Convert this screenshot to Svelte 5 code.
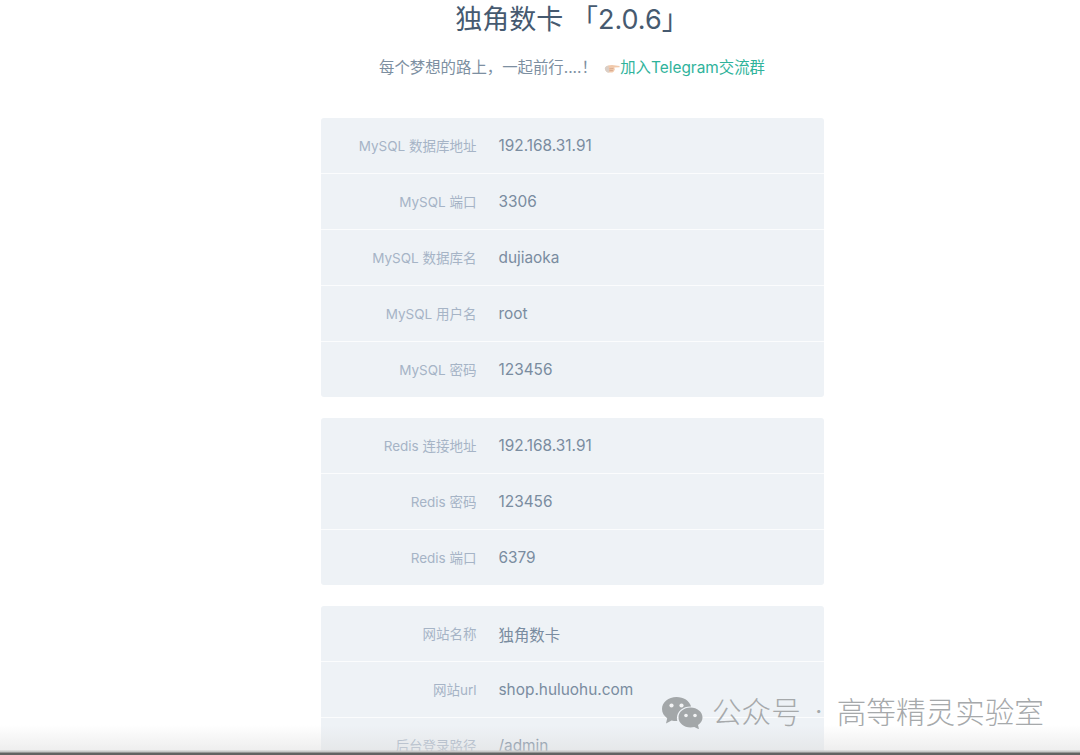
<script>
  const groups = [
    [
      ["MySQL 数据库地址", "192.168.31.91"],
      ["MySQL 端口", "3306"],
      ["MySQL 数据库名", "dujiaoka"],
      ["MySQL 用户名", "root"],
      ["MySQL 密码", "123456"],
    ],
    [
      ["Redis 连接地址", "192.168.31.91"],
      ["Redis 密码", "123456"],
      ["Redis 端口", "6379"],
    ],
    [
      ["网站名称", "独角数卡"],
      ["网站url", "shop.huluohu.com"],
      ["后台登录路径", "/admin"],
    ],
  ];
</script>

<div class="page">
  <main class="content">
    <h1>独角数卡 「2.0.6」</h1>
    <p class="intro">
      <span>每个梦想的路上，一起前行....！</span>
      <a href="#top">
        <svg class="hand" viewBox="0 0 18 12" width="16" height="11" aria-hidden="true">
          <path d="M1 6C1.600 3.800 3.800 2.600 6.500 2.400L9 2 17.500 3.300 17.500 4.600 11.500 5 12.200 7 11 9.500 9.500 10.500 5 10.600C3 10.400 1.200 8.400 1 6Z" fill="#f1c9ab" />
          <path d="M1 6C1.200 8.400 3 10.400 5 10.600L6 10.600 5 3 3.200 3.200C1.900 3.800 1.200 4.800 1 6Z" fill="#d9cfc8" />
          <path d="M6 6.400 10.500 6M6 8.400 10 8.200" stroke="#c99a80" stroke-width="0.7" fill="none" />
        </svg>加入Telegram交流群
      </a>
    </p>

    {#each groups as rows}
      <section class="group">
        {#each rows as [label, value]}
          <div class="row">
            <span class="label">{label}</span>
            <span class="value">{value}</span>
          </div>
        {/each}
      </section>
    {/each}
  </main>

  <div class="shade"></div>

  <div class="mark">
    <svg viewBox="0 0 42 34" width="42" height="34" aria-hidden="true">
      <path d="M15.500 2C7.500 2 1 7.400 1 14c0 3.700 2 7 5.200 9.200L5 28.400l5.600-3c1.500.4 3 .7 4.700.7h1a10.500 10.500 0 0 1-.4-2.900c0-6.700 6-11.600 13.600-11.600h.6C28.600 5.800 22.600 2 15.500 2Z" fill="#a3a7a9" />
      <path d="M29.500 12.500c-6.700 0-12 4.400-12 10s5.300 10 12 10c1.300 0 2.600-.2 3.800-.5l4.700 2.300-1-4.200c2.700-1.900 4.500-4.600 4.500-7.600 0-5.600-5.300-10-12-10Z" fill="#a3a7a9" />
      <circle cx="10.500" cy="10.500" r="2.100" fill="#f2f3f4" />
      <circle cx="20.500" cy="10.500" r="2.100" fill="#f2f3f4" />
      <circle cx="25" cy="20.500" r="1.800" fill="#f2f3f4" />
      <circle cx="34" cy="20.500" r="1.800" fill="#f2f3f4" />
    </svg>
    <span class="mark-text">公众号</span>
    <span class="dot">·</span>
    <span class="mark-text">高等精灵实验室</span>
  </div>
</div>

<style>
  :global(body) {
    background: #fff;
  }
  .page {
    position: relative;
    height: 755px;
    overflow: hidden;
    padding-left: 64px;
    font-family: Inter, "Noto Sans CJK SC", sans-serif;
  }
  .content {
    width: 503px;
    margin: 0 auto;
  }
  h1 {
    margin: 0;
    padding-top: 2px;
    height: 34px;
    line-height: 36px;
    font-size: 27px;
    font-weight: 400;
    color: #465a70;
    text-align: center;
    white-space: nowrap;
  }
  .intro {
    margin: 19px 0 0;
    height: 63px;
    line-height: 26px;
    font-size: 15.4px;
    color: #7d8fa1;
    text-align: center;
    white-space: nowrap;
  }
  .intro a {
    margin-left: 3px;
    color: #2fb39b;
    text-decoration: none;
  }
  .hand {
    vertical-align: -1px;
  }
  .group {
    background: #eef2f6;
    border-radius: 3px;
    margin-bottom: 21px;
  }
  .row {
    display: flex;
    align-items: center;
    height: 55px;
    border-bottom: 1px solid #fbfcfd;
  }
  .row:last-child {
    border-bottom: 0;
  }
  .label {
    width: 156px;
    padding-bottom: 2px;
    text-align: right;
    font-size: 13.5px;
    color: #a6b4c6;
  }
  .value {
    margin-left: 22px;
    font-size: 15.4px;
    color: #7a8ca0;
  }
  .shade {
    position: absolute;
    left: 0;
    right: 0;
    bottom: 0;
    height: 30px;
    background: linear-gradient(
      to bottom,
      rgba(225, 225, 225, 0) 0,
      rgba(222, 222, 222, 0.5) 25px,
      #c9c9c9 26px,
      #c9c9c9 27px,
      #626262 28px,
      #626262 30px
    );
  }
  .mark {
    position: absolute;
    left: 661px;
    top: 695px;
    display: flex;
    align-items: center;
    gap: 9px;
    line-height: 34px;
    color: #a6a9ab;
    white-space: nowrap;
  }
  .mark-text {
    font-size: 29.6px;
    font-weight: 300;
  }
  .dot {
    width: 18px;
    text-align: center;
    font-size: 24px;
  }
</style>
